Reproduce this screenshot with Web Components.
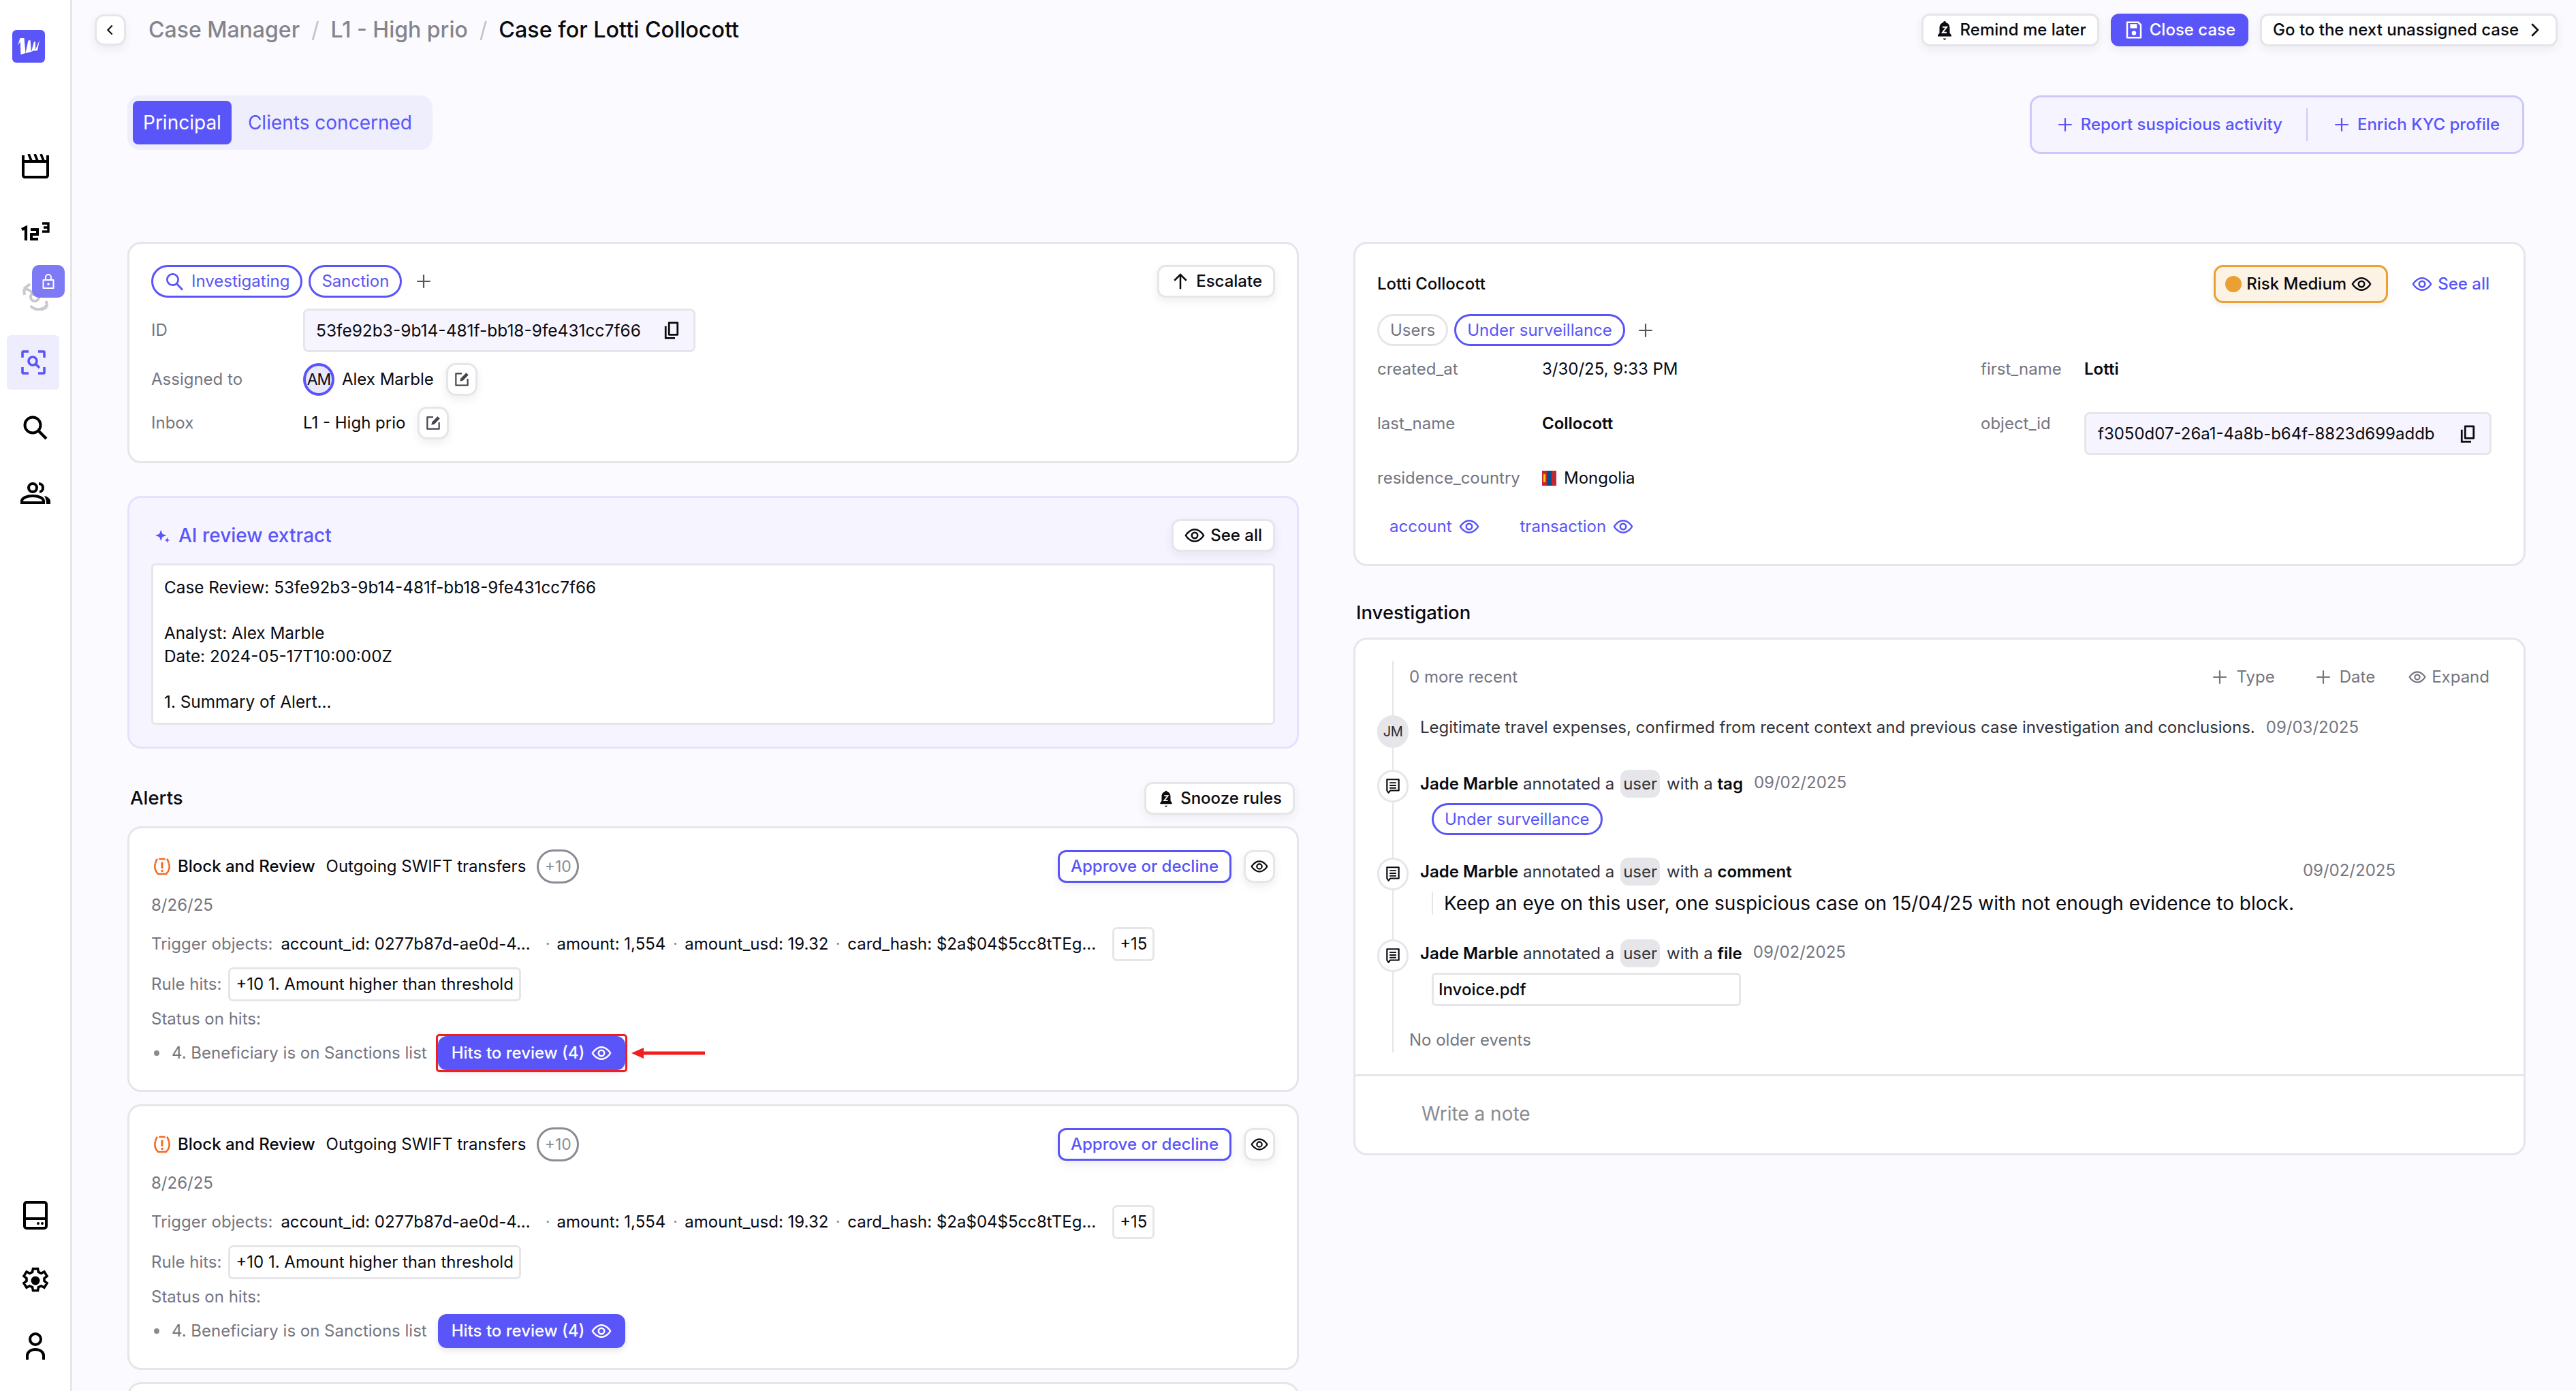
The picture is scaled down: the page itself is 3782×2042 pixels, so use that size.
<!DOCTYPE html>
<html lang="en"><head><meta charset="utf-8"><title>Case for Lotti Collocott</title>
<style>
html,body{margin:0;padding:0;height:100%;overflow:hidden;background:#fbfbff}
body{font-family:Inter,"Liberation Sans",sans-serif;font-size:24px;color:#0a0a0f}
</style>
<script>
const P='#5a55f8';
const ICONS={
eye:[24,24,'<path d="M1.5 12S5.5 5 12 5s10.500 7 10.500 7-4 7-10.500 7S1.500 12 1.500 12z" fill="none" stroke="currentColor" stroke-width="2"/><circle cx="12" cy="12" r="3.400" fill="none" stroke="currentColor" stroke-width="2"/>'],
plus:[24,24,'<path d="M12 3v18M3 12h18" stroke="currentColor" stroke-width="2" fill="none"/>'],
search:[24,24,'<circle cx="10" cy="10" r="6.500" fill="none" stroke="currentColor" stroke-width="2.200"/><path d="M15 15l6.500 7" stroke="currentColor" stroke-width="2.200" fill="none"/>'],
copy:[24,24,'<path d="M9 3h10v14H9z" fill="none" stroke="currentColor" stroke-width="2.200" stroke-linejoin="round"/><path d="M5 7v14h11" fill="none" stroke="currentColor" stroke-width="2.200"/>'],
edit:[24,24,'<path d="M12 4H4v16h16v-9" fill="none" stroke="currentColor" stroke-width="2" stroke-linejoin="round"/><path d="M9.500 14.500l1-4L18 3l3 3-7.500 7.500z" fill="currentColor"/>'],
up:[24,24,'<path d="M12 21V4M5 11l7-7 7 7" fill="none" stroke="currentColor" stroke-width="2"/>'],
left:[24,24,'<path d="M15 5l-7 7 7 7" fill="none" stroke="currentColor" stroke-width="2.200"/>'],
right:[24,24,'<path d="M9 5l7 7-7 7" fill="none" stroke="currentColor" stroke-width="2"/>'],
bell:[24,24,'<path d="M12 1.500c1 0 1.500.7 1.500 1.600 3.200.8 4.500 3.500 4.500 6.400v6l2 2.500v1.500H4V18l2-2.500v-6c0-2.900 1.300-5.600 4.500-6.400 0-.9.500-1.600 1.500-1.600z" fill="currentColor"/><path d="M10 22h4l-2 2z" fill="currentColor"/><path d="M9.500 8.500h5L9.500 15h5" fill="none" stroke="#fff" stroke-width="1.600"/>'],
save:[24,24,'<path d="M4 3h13l3 3v15H4z" fill="none" stroke="currentColor" stroke-width="2" stroke-linejoin="round"/><path d="M7.500 5h8v5h-8z" fill="currentColor"/><circle cx="12" cy="15.500" r="2.600" fill="currentColor"/>'],
alert:[24,24,'<path d="M8 2.500h8M3.500 8C2 12 3 18 7 21.500h10C21 18 22 12 20.500 8" fill="none" stroke="currentColor" stroke-width="2.200"/><path d="M6 2.500C4.800 4 4 6 3.500 8M18 2.500c1.200 1.500 2 3.500 2.500 5.500" fill="none" stroke="currentColor" stroke-width="2.200"/><path d="M12 6.500v8" stroke="currentColor" stroke-width="2.600"/><circle cx="12" cy="17.500" r="1.500" fill="currentColor"/>'],
note:[24,24,'<path d="M4 3h16v15H8.500L6 21 4 18z" fill="none" stroke="currentColor" stroke-width="2" stroke-linejoin="round"/><path d="M7.500 7.500h9M7.500 11h9M7.500 14.500h9" stroke="currentColor" stroke-width="1.800"/>'],
spark:[24,24,'<path d="M9 3l2.400 6.600L18 12l-6.600 2.400L9 21l-2.400-6.600L0 12l6.600-2.400z" fill="currentColor"/><path d="M19 15l1.200 3.300L23 19.500l-2.800 1.200L19 24l-1.200-3.300L15 19.500l2.800-1.200z" fill="currentColor"/>'],
clapper:[40,36,'<path d="M2 2v29.500A2.500 2.500 0 0 0 4.500 34h31a2.500 2.500 0 0 0 2.500-2.500V2M2 11h36" fill="none" stroke="currentColor" stroke-width="4"/><path d="M10 0l4 10M19 0l4 10M28 0l4 10" stroke="currentColor" stroke-width="3.600" fill="none"/>'],
n123:[42,28,'<path d="M1 11l6-3v19" fill="none" stroke="currentColor" stroke-width="4.200"/><path d="M14 11h10v7H15v7h10" fill="none" stroke="currentColor" stroke-width="4"/><path d="M31 2h9v12h-9M33 8h7" fill="none" stroke="currentColor" stroke-width="3.400"/>'],
sync:[38,42,'<path d="M2 9l9-7M2 9l1 9M2 9c6 0 12 3 14 10" fill="none" stroke="currentColor" stroke-width="4"/><path d="M36 36l-9 4M36 36l-1-9M36 33c-7 8-18 8-24 1" fill="none" stroke="currentColor" stroke-width="4"/><circle cx="18" cy="21" r="6" fill="none" stroke="currentColor" stroke-width="4"/>'],
lock:[24,24,'<path d="M4.500 10h15v12h-15z" fill="none" stroke="currentColor" stroke-width="2" stroke-linejoin="round"/><path d="M8 10V6a4 4 0 0 1 8 0v4" fill="none" stroke="currentColor" stroke-width="2"/><circle cx="12" cy="16" r="1.800" fill="currentColor"/>'],
focus:[36,36,'<path d="M2 11V3a1 1 0 0 1 1-1h8M25 2h8a1 1 0 0 1 1 1v8M34 25v8a1 1 0 0 1-1 1h-8M11 34H3a1 1 0 0 1-1-1v-8" fill="none" stroke="currentColor" stroke-width="3.600"/><circle cx="17" cy="16" r="6" fill="none" stroke="currentColor" stroke-width="3.600"/><path d="M21.500 20.500L27 26" stroke="currentColor" stroke-width="3.600"/>'],
search2:[36,36,'<circle cx="14" cy="14" r="11.500" fill="none" stroke="currentColor" stroke-width="4"/><path d="M22 22l12 12" stroke="currentColor" stroke-width="4.200"/>'],
users:[44,32,'<circle cx="18" cy="8" r="6" fill="none" stroke="currentColor" stroke-width="4"/><path d="M2 30v-2c0-5 7-8 16-8s16 3 16 8v2z" fill="none" stroke="currentColor" stroke-width="4"/><path d="M27 2c4 0 6 3 6 6s-2 6-5 6" fill="none" stroke="currentColor" stroke-width="4"/><path d="M35 20c5 1 9 4 9 8v4h-6c0-5-1-9-3-12z" fill="currentColor"/>'],
drive:[36,42,'<rect x="2" y="2" width="32" height="38" rx="3" fill="none" stroke="currentColor" stroke-width="4"/><path d="M2 26h32" stroke="currentColor" stroke-width="4"/><circle cx="22" cy="33" r="2" fill="currentColor"/><circle cx="28" cy="33" r="2" fill="currentColor"/>'],
gear:[40,40,'<path d="M16.500 2h7l1 5 4 1.800 4.500-2.500 4 6.500-4 3.200v4l4 3.200-4 6.500-4.500-2.500-4 1.800-1 5h-7l-1-5-4-1.800-4.500 2.500-4-6.500 4-3.200v-4l-4-3.200 4-6.500 4.500 2.500 4-1.800z" transform="translate(0 .500)" fill="none" stroke="currentColor" stroke-width="3.600" stroke-linejoin="miter"/><circle cx="20" cy="20" r="6.500" fill="currentColor"/>'],
user:[28,40,'<circle cx="14" cy="10" r="8" fill="none" stroke="currentColor" stroke-width="4"/><path d="M2 39v-5c0-5 5-9 12-9s12 4 12 9v5" fill="none" stroke="currentColor" stroke-width="4" stroke-linecap="round"/>'],
logo:[32,24,'<path d="M0 11L3.500 0H9.500L11.500 22L4.500 24L3.800 5z" fill="currentColor"/><path d="M11.500 22L15.500 3.500L18.500 3L20 20L14 21.500z" fill="currentColor"/><path d="M20 20L24 5L26 5.500L26 17zM26 17L32 3L29 18L24 19z" fill="currentColor"/>'],
flag:[21,34,'<rect width="7" height="34" fill="#c4272f"/><rect x="7" width="7" height="34" fill="#015197"/><rect x="14" width="7" height="34" fill="#c4272f"/><rect x="2" y="8" width="3" height="18" fill="#f9cf02"/>'],
arrow:[108,18,'<path d="M16 9h92" stroke="#f01e1e" stroke-width="5"/><path d="M0 9l18-8v16z" fill="#f01e1e"/>']
};
function def(name,css,render){customElements.define(name,class extends HTMLElement{connectedCallback(){if(this.shadowRoot)return;const s=this.attachShadow({mode:'open'});s.innerHTML='<style>'+css+'</style>'+(typeof render==='function'?render(this):render);}});}

def('x-icon',':host{display:inline-flex;flex:none}svg{display:block}',el=>{const n=el.getAttribute('name');const[w,h,b]=ICONS[n];const W=el.getAttribute('w')||w;const H=el.getAttribute('h')||(el.getAttribute('w')?W*h/w:h);return `<svg width="${W}" height="${H}" viewBox="0 0 ${w} ${h}" preserveAspectRatio="none">${b}</svg>`});

def('x-btn',`:host{display:inline-flex;align-items:center;justify-content:center;box-sizing:border-box;gap:8px;height:48px;padding:0 16px;border-radius:12px;border:3px solid #e6e6ea;background:#fff;color:#0a0a0f;font:500 24px/1 Inter,sans-serif;box-shadow:0 5px 14px rgba(20,20,40,.07);white-space:nowrap;flex:none}
:host([kind=primary]){background:${P};border-color:${P};color:#fff}
:host([kind=outline]){border-color:${P};color:${P}}
:host([square]){padding:0;width:46px;border-radius:14px}`,'<slot></slot>');

def('x-tag',`:host{display:inline-flex;align-items:center;box-sizing:border-box;gap:10px;height:48px;padding:0 16px;border-radius:24px;border:3px solid ${P};background:#fff;color:${P};font:400 24px/1 Inter,sans-serif;white-space:nowrap;flex:none}
:host([gray]){border-color:#e6e6ea;color:#75757f}`,'<slot></slot>');

def('x-copy',`:host{display:inline-flex;align-items:center;justify-content:space-between;box-sizing:border-box;background:#f6f5ff;border:3px solid #e6e6ea;border-radius:8px;font:400 24.500px/1 Inter,sans-serif;color:#0a0a0f;height:64px;padding:0 17px 0 16px;white-space:nowrap}`,'<slot></slot><x-icon name="copy" w="30"></x-icon>');

def('x-card',`:host{display:block;box-sizing:border-box;background:#fff;border:3px solid #e6e6ea;border-radius:20px}`,'<slot></slot>');

def('app-sidebar',`:host{flex:none;box-sizing:border-box;width:106px;height:100%;background:#fff;border-right:3px solid #e6e6ea;display:flex;flex-direction:column;padding-bottom:18px}
.logo{margin:44px 0 104px 18px;width:48px;height:48px;border-radius:6px;background:${P};color:#fff;display:flex;align-items:center;justify-content:center}
.it{height:96px;display:flex;align-items:center;justify-content:center;color:#000;position:relative}
.sp{flex:1}
.on{width:77px;height:80px;margin:8px 16px 8px 10px;background:#eeedfe;border-radius:6px;color:${P}}
.sy{color:#c9c9cf}
.lk{position:absolute;left:47px;top:1px;width:48px;height:48px;border-radius:10px;background:#7e79f5;color:#fff;display:flex;align-items:center;justify-content:center}`,
`<div class="logo"><x-icon name="logo" w="32" h="24"></x-icon></div>
<div class="it"><x-icon name="clapper"></x-icon></div>
<div class="it"><x-icon name="n123"></x-icon></div>
<div class="it sy"><x-icon name="sync"></x-icon><div class="lk"><x-icon name="lock" w="24"></x-icon></div></div>
<div class="it on"><x-icon name="focus"></x-icon></div>
<div class="it"><x-icon name="search2"></x-icon></div>
<div class="it"><x-icon name="users"></x-icon></div>
<div class="sp"></div>
<div class="it"><x-icon name="drive"></x-icon></div>
<div class="it"><x-icon name="gear"></x-icon></div>
<div class="it"><x-icon name="user"></x-icon></div>`);

def('top-bar',`:host{display:flex;align-items:center;height:88px;margin:0 -47px 0 -48px;font:500 32px/1 Inter,sans-serif;color:#84848d}
.sl{margin:0 17px;color:#c2c2c8;font-weight:400}
.cur{color:#0a0a0f;font-size:32.300px}
.sp{flex:1}
.r{display:flex;gap:17px}`,
`<x-btn square style="height:46px"><x-icon name="left" w="22"></x-icon></x-btn>
<span style="width:33px"></span>
<span>Case Manager</span><span class="sl">/</span><span>L1 - High prio</span><span class="sl">/</span><span class="cur">Case for Lotti Collocott</span>
<span class="sp"></span>
<div class="r"><x-btn><x-icon name="bell" w="30"></x-icon>Remind me later</x-btn><x-btn kind="primary"><x-icon name="save" w="30"></x-icon>Close case</x-btn><x-btn>Go to the next unassigned case<x-icon name="right" w="30"></x-icon></x-btn></div>`);

def('case-tabs',`:host{display:flex;align-items:center;box-sizing:border-box;height:80px;padding:8px;background:#efeefd;border-radius:18px;font:400 28px/1 Inter,sans-serif;color:${P}}
.a{height:64px;box-sizing:border-box;padding:0 15px;display:flex;align-items:center;background:${P};color:#fff;border-radius:8px}
.b{padding:0 22px 0 24px}`,'<div class="a">Principal</div><div class="b">Clients concerned</div>');

def('action-box',`:host{display:flex;align-items:center;box-sizing:border-box;height:86px;background:#f6f5ff;border:3px solid #cbc9fb;border-radius:16px;color:${P};font:500 24px/1 Inter,sans-serif;padding:0 33px 0 36px;white-space:nowrap}
.i{display:flex;align-items:center;gap:10px}.d{width:2px;height:48px;background:#cbc9fb;margin:0 37px 0 35px}`,
`<div class="i"><x-icon name="plus" w="26"></x-icon>Report suspicious activity</div><div class="d"></div><div class="i"><x-icon name="plus" w="26"></x-icon>Enrich KYC profile</div>`);

def('case-card',`:host{display:block}
.c{padding:31px 32px 32px}
.top{display:flex;align-items:center;justify-content:space-between;height:48px}
.tags{display:flex;align-items:center;gap:9px}
.row{display:flex;align-items:center;margin-top:16px;height:48px;font:400 24px/1 Inter,sans-serif}
.l{width:223px;color:#75757f;flex:none}
.av{width:46px;height:48px;box-sizing:border-box;border:4px solid ${P};background:#e9e8fd;border-radius:50%;display:flex;align-items:center;justify-content:center;letter-spacing:-1px;margin-right:11px;font-size:23px}
.ed{color:#44444c}`,
`<x-card><div class="c"><div class="top"><div class="tags"><x-tag><x-icon name="search" w="30"></x-icon>Investigating</x-tag><x-tag>Sanction</x-tag><x-icon name="plus" w="26" style="color:#55555e;margin-left:10px"></x-icon></div><x-btn><x-icon name="up" w="30"></x-icon>Escalate</x-btn></div>
<div class="row" style="height:64px"><div class="l">ID</div><x-copy style="width:576px">53fe92b3-9b14-481f-bb18-9fe431cc7f66</x-copy></div>
<div class="row"><div class="l">Assigned to</div><div class="av">AM</div><span>Alex Marble</span><x-btn square style="margin-left:18px"><x-icon class="ed" name="edit" w="26"></x-icon></x-btn></div>
<div class="row"><div class="l">Inbox</div><span>L1 - High prio</span><x-btn square style="margin-left:18px"><x-icon class="ed" name="edit" w="26"></x-icon></x-btn></div></div></x-card>`);

def('ai-card',`:host{display:block;margin-top:48px;box-sizing:border-box;background:#f6f5ff;border:3px solid #e4e2fd;border-radius:20px;padding:31px 32px 32px}
.h{display:flex;align-items:center;justify-content:space-between;height:48px;color:${P};font:500 28px/1 Inter,sans-serif}
.t{display:flex;align-items:center;gap:12px;margin-left:6px}
.b{margin-top:17px;box-sizing:border-box;height:237px;background:#fff;border:3px solid #e6e6ea;border-radius:6px;padding:16px 16px 14px;font:400 24.300px/33.500px Inter,sans-serif;white-space:pre-line}`,
`<div class="h"><div class="t"><x-icon name="spark" w="22"></x-icon>AI review extract</div><x-btn><x-icon name="eye" w="30"></x-icon>See all</x-btn></div>
<div class="b">Case Review: 53fe92b3-9b14-481f-bb18-9fe431cc7f66

Analyst: Alex Marble
Date: 2024-05-17T10:00:00Z

1. Summary of Alert...</div>`);

def('sect-head',`:host{display:flex;align-items:center;justify-content:space-between;height:46px;padding:0 6px 0 4px;font:500 27.500px/1 Inter,sans-serif;color:#0a0a0f}`,'<slot></slot><slot name="r"></slot>');

def('alert-card',`:host{display:block;margin-top:18px}
.c{height:384px;box-sizing:border-box;padding:31px 32px 0;font:400 24px/1 Inter,sans-serif;color:#75757f;white-space:nowrap}
.r{display:flex;align-items:center}
.t{height:50px}
.k{color:#0a0a0f}
.pl{box-sizing:border-box;width:62px;height:50px;border:3px solid #8b8b93;border-radius:25px;display:flex;align-items:center;justify-content:center;color:#8b8b93;margin-left:16px;background:#fff;font-size:23px}
.sp{flex:1}
.box{box-sizing:border-box;height:50px;border:3px solid #e6e6ea;border-radius:7px;background:#fff;display:flex;align-items:center;padding:0 8px;color:#0a0a0f}
.dot{color:#8b8b93;margin:0 10.500px}
.tr{margin-top:15px;height:50px}
.dt{margin-top:15px;height:34px}
.st{margin-top:9px;height:34px}
.bl{display:block;width:8px;height:8px;border-radius:50%;background:#8b8b93;margin:0 18px 0 4px}
.hw{margin-left:16px;display:flex;border-radius:2px}
:host([marked]) .hw{outline:3px solid #f01e1e}
.hit{box-sizing:border-box;height:50px;border-radius:13px;background:${P};color:#fff;display:flex;align-items:center;gap:10px;padding:0 20px;font-weight:500;box-shadow:0 4px 10px rgba(20,20,40,.1)}
.ar{margin-left:9px}`,
el=>`<x-card><div class="c">
<div class="r t"><x-icon name="alert" w="28" style="color:#f26a21;margin:0 9px 0 2px"></x-icon><span class="k" style="font-weight:500">Block and Review</span><span class="k" style="margin-left:16px">Outgoing SWIFT transfers</span><span class="pl">+10</span><span class="sp"></span><x-btn kind="outline">Approve or decline</x-btn><x-btn square style="margin-left:18px"><x-icon name="eye" w="26"></x-icon></x-btn></div>
<div class="r dt">8/26/25</div>
<div class="r tr"><span>Trigger objects:</span><span class="k" style="margin-left:12px">account_id: 0277b87d-ae0d-4...</span><span class="dot" style="margin:0 10px 0 22px">·</span><span class="k">amount: 1,554</span><span class="dot">·</span><span class="k">amount_usd: 19.32</span><span class="dot">·</span><span class="k">card_hash: $2a$04$5cc8tTEg...</span><span class="box" style="margin-left:24px">+15</span></div>
<div class="r" style="margin-top:9px;height:50px"><span>Rule hits:</span><span class="box" style="margin-left:10px">+10 1. Amount higher than threshold</span></div>
<div class="r st">Status on hits:</div>
<div class="r" style="margin-top:8px;height:50px"><span class="bl"></span><span>4. Beneficiary is on Sanctions list</span><span class="hw"><span class="hit">Hits to review (4)<x-icon name="eye" w="30"></x-icon></span></span>${el.hasAttribute('marked')?'<x-icon class="ar" name="arrow" w="108" h="18"></x-icon>':''}</div>
</div></x-card>`);

def('empty-card',`:host{display:block;margin-top:18px;height:390px}`,'<x-card style="height:390px"></x-card>');

def('user-card',`:host{display:block}
.c{height:470px;box-sizing:border-box;padding:31px 45px 0 32px;font:400 24px/34px Inter,sans-serif;white-space:nowrap}
.h{display:flex;align-items:center;height:56px;font-weight:500}
.sp{flex:1}
.risk{display:flex;align-items:center;box-sizing:border-box;height:56px;width:256px;border:3px solid #eba033;background:#fdf3e4;border-radius:14px;padding:0 14px;gap:7px;box-shadow:0 4px 10px rgba(20,20,40,.06);font-weight:500}
.o{width:24px;height:24px;border-radius:50%;background:#eba033;flex:none}
.all{display:flex;align-items:center;gap:8px;color:${P};margin-left:35px;font-weight:500;margin-right:5px}
.tags{display:flex;align-items:center;gap:9px;margin-top:16px;height:47px}
.g{display:grid;grid-template-columns:242px 644px 152px 1fr;grid-auto-rows:80px;margin-top:17px}
.l{color:#75757f}.b{font-weight:600}
.f{display:flex;align-items:center;gap:11px;height:34px}
.lk{display:flex;gap:60px;margin:-9px 0 0 18px;color:${P}}
.lk span{display:flex;align-items:center;gap:10px}`,
`<x-card><div class="c">
<div class="h"><span>Lotti Collocott</span><span class="sp"></span><div class="risk"><span class="o"></span>Risk Medium<x-icon name="eye" w="30"></x-icon></div><div class="all"><x-icon name="eye" w="30"></x-icon>See all</div></div>
<div class="tags"><x-tag gray style="height:47px">Users</x-tag><x-tag style="height:47px">Under surveillance</x-tag><x-icon name="plus" w="26" style="color:#55555e;margin-left:8px"></x-icon></div>
<div class="g"><span class="l">created_at</span><span>3/30/25, 9:33 PM</span><span class="l">first_name</span><span class="b">Lotti</span>
<span class="l">last_name</span><span class="b">Collocott</span><span class="l">object_id</span><x-copy style="height:63px;width:598px;padding:0 17px 0 17px;font-size:24px">f3050d07-26a1-4a8b-b64f-8823d699addb</x-copy>
<span class="l">residence_country</span><span class="f"><x-icon name="flag" w="21" h="22"></x-icon>Mongolia</span><span></span><span></span></div>
<div class="lk"><span>account<x-icon name="eye" w="30"></x-icon></span><span>transaction<x-icon name="eye" w="30"></x-icon></span></div>
</div></x-card>`);

def('tl-item',`:host{display:flex;margin-left:-24px;white-space:nowrap}
.n{flex:none;width:46px;height:48px;box-sizing:border-box;border-radius:23px;background:#fff;border:3px solid #e6e6ea;display:flex;align-items:center;justify-content:center;color:#0a0a0f}
:host([jm]) .n{background:#e6e6ea;font-size:20px;letter-spacing:-.5px;color:#2a2a30}
.b{margin-left:17px;flex:1}`,
el=>`<div class="n">${el.hasAttribute('jm')?'JM':'<x-icon name="note" w="26"></x-icon>'}</div><div class="b"><slot></slot></div>`);

def('investigation-card',`:host{display:block;margin-top:18px}
.tl{margin:31px 0 0 54px;height:575px;border-left:2px solid #e6e6ea;box-sizing:border-box;font:400 24px/34px Inter,sans-serif;white-space:nowrap;color:#0a0a0f}
.top{display:flex;align-items:center;height:48px;margin:0 50px 0 23px;color:#75757f}
.sp{flex:1}
.top span{display:flex;align-items:center}
.d{color:#75757f}
b{font-weight:600;color:#0a0a0f}
.u{display:inline-flex;align-items:center;height:41px;padding:0 4px;background:#e6e6ea;border-radius:12px;margin:0 10px 0 9px}
.hd{display:flex;align-items:center;height:41px;color:#33333a}
.cm{margin:9px 0 0 17px;border-left:2px solid #e6e6ea;padding-left:16px;height:34px;font-size:28px;display:flex;align-items:center}
.file{box-sizing:border-box;margin:8px 0 0 17px;width:454px;height:49px;border:3px solid #e6e6ea;border-radius:6px;padding:0 7px;display:flex;align-items:center;font-weight:500}
.no{margin:33px 0 0 23px;color:#75757f}
.note{height:116px;box-sizing:border-box;border-top:3px solid #e6e6ea;display:flex;align-items:center;padding:0 0 3px 97px;color:#8b8b90;font:400 28px/1 Inter,sans-serif;margin-top:32px}`,
`<x-card><div class="tl">
<div class="top"><span>0 more recent</span><span class="sp"></span><span style="gap:12px"><x-icon name="plus" w="26"></x-icon>Type</span><span style="margin-left:58px;gap:11px"><x-icon name="plus" w="26"></x-icon>Date</span><span style="margin-left:49px;gap:8px"><x-icon name="eye" w="26"></x-icon>Expand</span></div>
<tl-item jm style="margin-top:32px"><div style="height:34px;margin-top:1px;color:#33333a">Legitimate travel expenses, confirmed from recent context and previous case investigation and conclusions.<span class="d" style="margin-left:16px">09/03/2025</span></div></tl-item>
<tl-item style="margin-top:32px"><div class="hd"><b>Jade Marble</b>&nbsp;annotated a<span class="u">user</span>with a&nbsp;<b>tag</b><span class="d" style="margin:-4px 0 0 16px">09/02/2025</span></div><div style="margin:8px 0 0 17px"><x-tag style="height:47px">Under surveillance</x-tag></div></tl-item>
<tl-item style="margin-top:33px"><div class="hd" style="width:1432px"><b>Jade Marble</b>&nbsp;annotated a<span class="u">user</span>with a&nbsp;<b>comment</b><span class="sp"></span><span class="d" style="margin-top:-4px">09/02/2025</span></div><div class="cm">Keep an eye on this user, one suspicious case on 15/04/25 with not enough evidence to block.</div></tl-item>
<tl-item style="margin-top:36px"><div class="hd"><b>Jade Marble</b>&nbsp;annotated a<span class="u">user</span>with a&nbsp;<b>file</b><span class="d" style="margin:-4px 0 0 16px">09/02/2025</span></div><div class="file">Invoice.pdf</div></tl-item>
<div class="no">No older events</div>
</div><div class="note">Write a note</div></x-card>`);

def('page-main',`:host{flex:1;min-width:0;box-sizing:border-box;padding:0 74px 0 81px;height:100%;overflow:hidden;display:block}
.tabs{display:flex;justify-content:space-between;align-items:flex-start;margin-top:52px;padding-right:2px}
.cols{display:grid;grid-template-columns:1720px 1fr;column-gap:80px;margin-top:129px;align-items:start}
.sh{margin-top:50px}
.sh2{margin-top:51px;height:36px}`,
`<top-bar></top-bar>
<div class="tabs"><case-tabs></case-tabs><action-box></action-box></div>
<div class="cols"><div><case-card></case-card><ai-card></ai-card><sect-head class="sh">Alerts<x-btn slot="r"><x-icon name="bell" w="26"></x-icon>Snooze rules</x-btn></sect-head><alert-card marked></alert-card><alert-card></alert-card><empty-card></empty-card></div>
<div><user-card></user-card><sect-head class="sh2">Investigation</sect-head><investigation-card></investigation-card></div></div>`);

def('app-shell',`:host{display:flex;width:100%;height:100%}`,'<slot></slot>');
</script>
</head><body><app-shell><app-sidebar></app-sidebar><page-main></page-main></app-shell></body></html>
